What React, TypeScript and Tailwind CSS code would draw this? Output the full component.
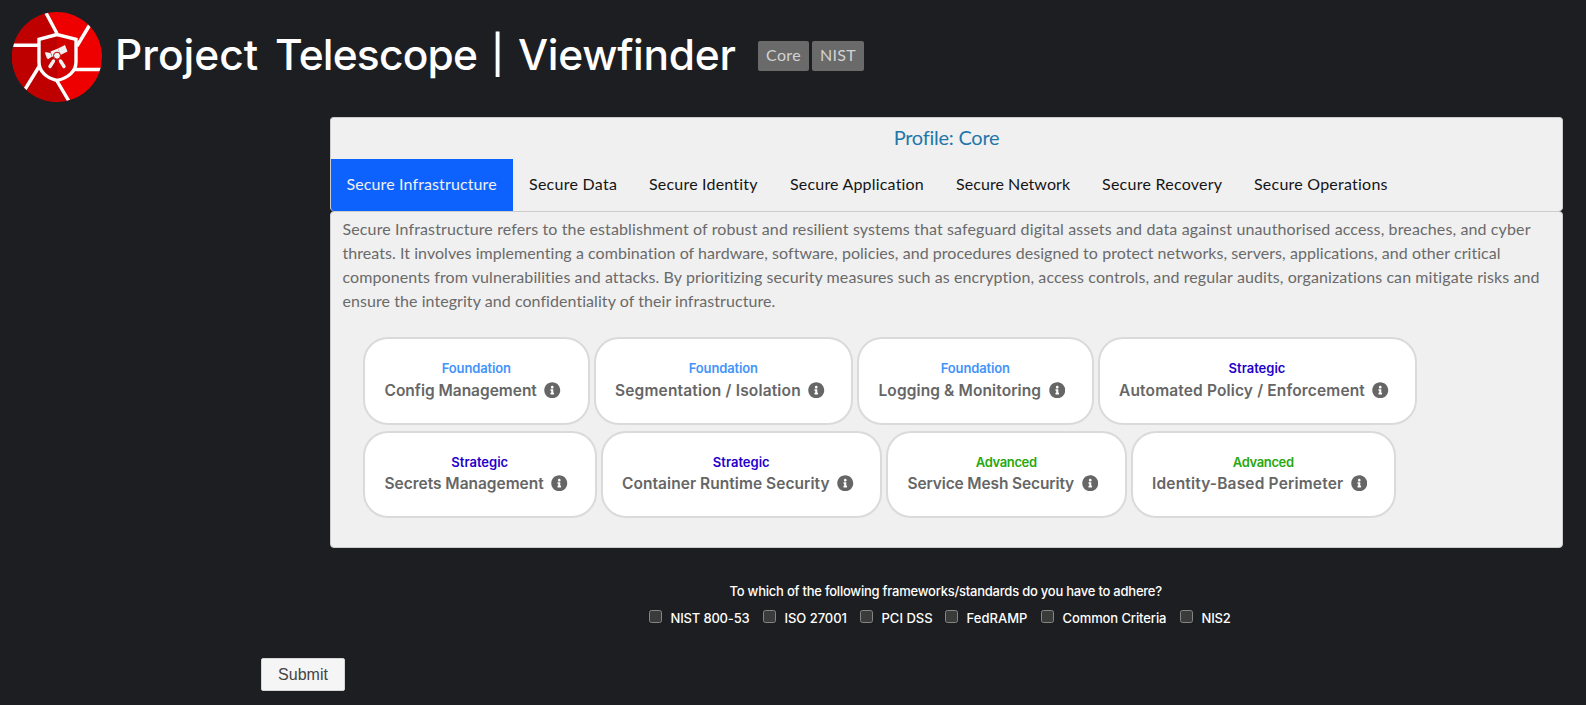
import { FaInfoCircle } from "react-icons/fa";

type Capability = { level: string; name: string; card: string; text: string };

const LEVELS: Record<string, string> = {
  Foundation: "text-[#4394fa] tracking-[-0.15px]",
  Strategic: "text-[#1f00cc] tracking-[0px]",
  Advanced: "text-[#27a80f] tracking-[-0.38px]",
};

const TABS = [
  { label: "Secure Infrastructure", width: "w-[182px]", text: "pl-[15.5px] tracking-[0.12px]" },
  { label: "Secure Data", width: "w-[120px]", text: "pl-4 tracking-[0.27px]" },
  { label: "Secure Identity", width: "w-[141px]", text: "pl-4 tracking-[0.2px]" },
  { label: "Secure Application", width: "w-[166px]", text: "pl-4 tracking-[0.19px]" },
  { label: "Secure Network", width: "w-[146px]", text: "pl-4 tracking-[0.06px]" },
  { label: "Secure Recovery", width: "w-[152px]", text: "pl-4 tracking-[0.25px]" },
  { label: "Secure Operations", width: "w-[165px]", text: "pl-4 tracking-[0.23px]" },
];

const DESCRIPTION = [
  {
    line: "Secure Infrastructure refers to the establishment of robust and resilient systems that safeguard digital assets and data against unauthorised access, breaches, and cyber",
    text: "tracking-[0.127px]",
  },
  {
    line: "threats. It involves implementing a combination of hardware, software, policies, and procedures designed to protect networks, servers, applications, and other critical",
    text: "tracking-[0.053px]",
  },
  {
    line: "components from vulnerabilities and attacks. By prioritizing security measures such as encryption, access controls, and regular audits, organizations can mitigate risks and",
    text: "tracking-[0.091px]",
  },
  {
    line: "ensure the integrity and confidentiality of their infrastructure.",
    text: "tracking-[0.06px]",
  },
];

const FIRST_ROW: Capability[] = [
  { level: "Foundation", name: "Config Management", card: "w-[226.5px]", text: "tracking-[-0.02px]" },
  { level: "Foundation", name: "Segmentation / Isolation", card: "w-[259.5px]", text: "tracking-[0.17px]" },
  { level: "Foundation", name: "Logging & Monitoring", card: "w-[236.5px]", text: "tracking-[0.11px]" },
  { level: "Strategic", name: "Automated Policy / Enforcement", card: "w-[319px]", text: "tracking-[0.15px]" },
];

const SECOND_ROW: Capability[] = [
  { level: "Strategic", name: "Secrets Management", card: "w-[233.5px]", text: "tracking-[-0.02px]" },
  { level: "Strategic", name: "Container Runtime Security", card: "w-[281.5px]", text: "tracking-[0.05px]" },
  { level: "Advanced", name: "Service Mesh Security", card: "w-[240.5px]", text: "tracking-[-0.13px]" },
  { level: "Advanced", name: "Identity-Based Perimeter", card: "w-[265.5px]", text: "tracking-[0.17px]" },
];

const FRAMEWORKS = [
  { label: "NIST 800-53", width: "w-[114px]", text: "tracking-[-0.17px]" },
  { label: "ISO 27001", width: "w-[97px]", text: "tracking-[-0.05px]" },
  { label: "PCI DSS", width: "w-[85px]", text: "tracking-[0px]" },
  { label: "FedRAMP", width: "w-[96px]", text: "tracking-[0.04px]" },
  { label: "Common Criteria", width: "w-[139px]", text: "tracking-[-0.1px]" },
  { label: "NIS2", width: "w-[51px]", text: "tracking-[-0.2px]" },
];

function Logo() {
  return (
    <svg viewBox="0 0 90 90" className="h-[90px] w-[90px] shrink-0">
      <clipPath id="disc">
        <circle cx="45" cy="45" r="45" />
      </clipPath>
      <g clipPath="url(#disc)">
        <path d="M0 0H90V90H0z" fill="#ee0000" />
        <path d="M34 0L45 22V69L57 90H0V0z" fill="#be0000" />
        <g stroke="#fff" strokeWidth="3.4" fill="none">
          <path d="M33.500 0L45 21.500M78 12.500L65 34M63 57.500H90M45 69L57.500 90M12 79L28 53M0 33.300H27" />
        </g>
        <path d="M45 22.500L27 27.300V50C27 59.500 34.500 66 45 68.500C56 66 64 59.500 64 50V27.300Z" fill="#be0000" />
        <path d="M45 22.500L64 27.300V50C64 59.500 56 66 45 68.500Z" fill="#d30000" />
        <path d="M45 22.500L27 27.300V50C27 59.500 34.500 66 45 68.500C56 66 64 59.500 64 50V27.300Z" fill="none" stroke="#fff" strokeWidth="3.400" />
      </g>
      <g fill="#f1f1f1">
        <path d="M46 36.500L53 33L55.500 39.500L48.500 43Z" />
        <path d="M38.500 39.500L46 36.500L48 42.500L40.500 45Z" />
        <path d="M32.800 40.500L34.500 40.200L38.500 41L40 44.500L36.500 47L35 46.500Z" />
      </g>
      <path d="M41.500 49L38 54.500M48.500 49L52 54.500" stroke="#f1f1f1" strokeWidth="3.400" strokeLinecap="round" />
      <circle cx="45" cy="43.700" r="3.500" fill="#f1f1f1" stroke="#c40000" strokeWidth="1" />
    </svg>
  );
}

function Card({ item, nameGap }: { item: Capability; nameGap: string }) {
  return (
    <button
      type="button"
      className={`flex h-full flex-col rounded-[25px] border-2 border-[#dadada] bg-white pt-[19px] font-['Inter','Liberation_Sans',sans-serif] ${item.card}`}
    >
      <span className={`block w-full text-center text-[13px] leading-[21px] font-semibold ${LEVELS[item.level]}`}>
        {item.level}
      </span>
      <span className={`flex items-center gap-[7.5px] pl-[19.5px] text-[15.5px] leading-6 font-semibold whitespace-nowrap text-[#666] ${nameGap}`}>
        <span className={item.text}>{item.name}</span>
        <FaInfoCircle className="mb-[2px] h-[16.5px] w-[16.5px]" />
      </span>
    </button>
  );
}

export default function App() {
  return (
    <div className="flex h-[705px] w-[1586px] flex-col overflow-hidden bg-[#1d1e21] font-['Lato','Liberation_Sans',sans-serif]">
      <header className="flex h-[117px] items-start pt-3 pl-3">
        <Logo />
        <h1 className="mt-[15px] ml-[13px] flex h-[60px] w-[643px] font-['Inter','Liberation_Sans',sans-serif] text-[42.5px] leading-[55px] font-medium whitespace-pre text-white">
          <span className="w-[160px]">Project</span>
          <span className="w-[216px] tracking-[-0.8px]">Telescope</span>
          <span className="w-[27px] text-[38px]">|</span>
          <span className="tracking-[-0.3px]">Viewfinder</span>
        </h1>
        <div className="mt-[29px] flex gap-[3px] text-[16px] leading-[28px] text-[#d2d2d2]">
          <span className="h-[30px] w-[51px] rounded-[2px] bg-[#6a6a6a] text-center tracking-[0.36px]">Core</span>
          <span className="h-[30px] w-[52px] rounded-[2px] bg-[#6a6a6a] text-center tracking-[0.3px]">NIST</span>
        </div>
      </header>

      <main className="ml-[330px] w-[1233px]">
        <section className="h-[94px] overflow-hidden rounded-[4px] border border-b-0 border-[#ccc] bg-[#f0f0f0]">
          <h2 className="h-[41px] pt-1 text-center text-[20px] leading-[30px] tracking-[-0.25px] text-[#1f77aa]">Profile: Core</h2>
          <nav className="flex">
            {TABS.map((tab, i) => (
              <button
                type="button"
                key={tab.label}
                className={`h-[52px] pb-[3px] text-left text-[16px] leading-6 whitespace-nowrap ${tab.width} ${tab.text} ${
                  i === 0 ? "bg-[#0d62fe] text-[#f0f0f0]" : "text-[#151515]"
                }`}
              >
                {tab.label}
              </button>
            ))}
          </nav>
        </section>

        <section className="h-[337px] rounded-[4px] border border-[#ccc] bg-[#f0f0f0] pt-[5px]">
          <p className="pl-[11.5px] text-[16px] leading-6 whitespace-nowrap text-[#6a6a6a]">
            {DESCRIPTION.map((d) => (
              <span key={d.line} className={`block ${d.text}`}>
                {d.line}
              </span>
            ))}
          </p>
          <div className="mt-6 ml-8 flex h-[88px] gap-1">
            {FIRST_ROW.map((item) => (
              <Card key={item.name} item={item} nameGap="mt-0" />
            ))}
          </div>
          <div className="mt-[6px] ml-8 flex h-[87px] gap-1">
            {SECOND_ROW.map((item) => (
              <Card key={item.name} item={item} nameGap="-mt-px" />
            ))}
          </div>
        </section>
      </main>

      <form className="mt-[33px] font-['Inter','Liberation_Sans',sans-serif] font-medium text-white">
        <p className="ml-[729.5px] text-[13px] leading-[21px] tracking-[-0.23px]">
          To which of the following frameworks/standards do you have to adhere?
        </p>
        <div className="mt-[6px] ml-[649px] flex text-[13px] leading-[21px] whitespace-nowrap">
          {FRAMEWORKS.map((f) => (
            <label key={f.label} className={`flex ${f.width}`}>
              <input
                type="checkbox"
                className="mt-[2px] mr-[8.5px] h-[13px] w-[13px] shrink-0 appearance-none rounded-[2.5px] border border-[#858585] bg-[#3b3b3b]"
              />
              <span className={f.text}>{f.label}</span>
            </label>
          ))}
        </div>
        <button
          type="button"
          className="mt-[29px] ml-[261px] block h-[33px] w-[84px] rounded-[2px] border border-[#d5d5d5] bg-[#f5f5f5] font-['Liberation_Sans',sans-serif] text-[16px] leading-[31px] font-normal text-[#444]"
        >
          Submit
        </button>
      </form>
    </div>
  );
}
